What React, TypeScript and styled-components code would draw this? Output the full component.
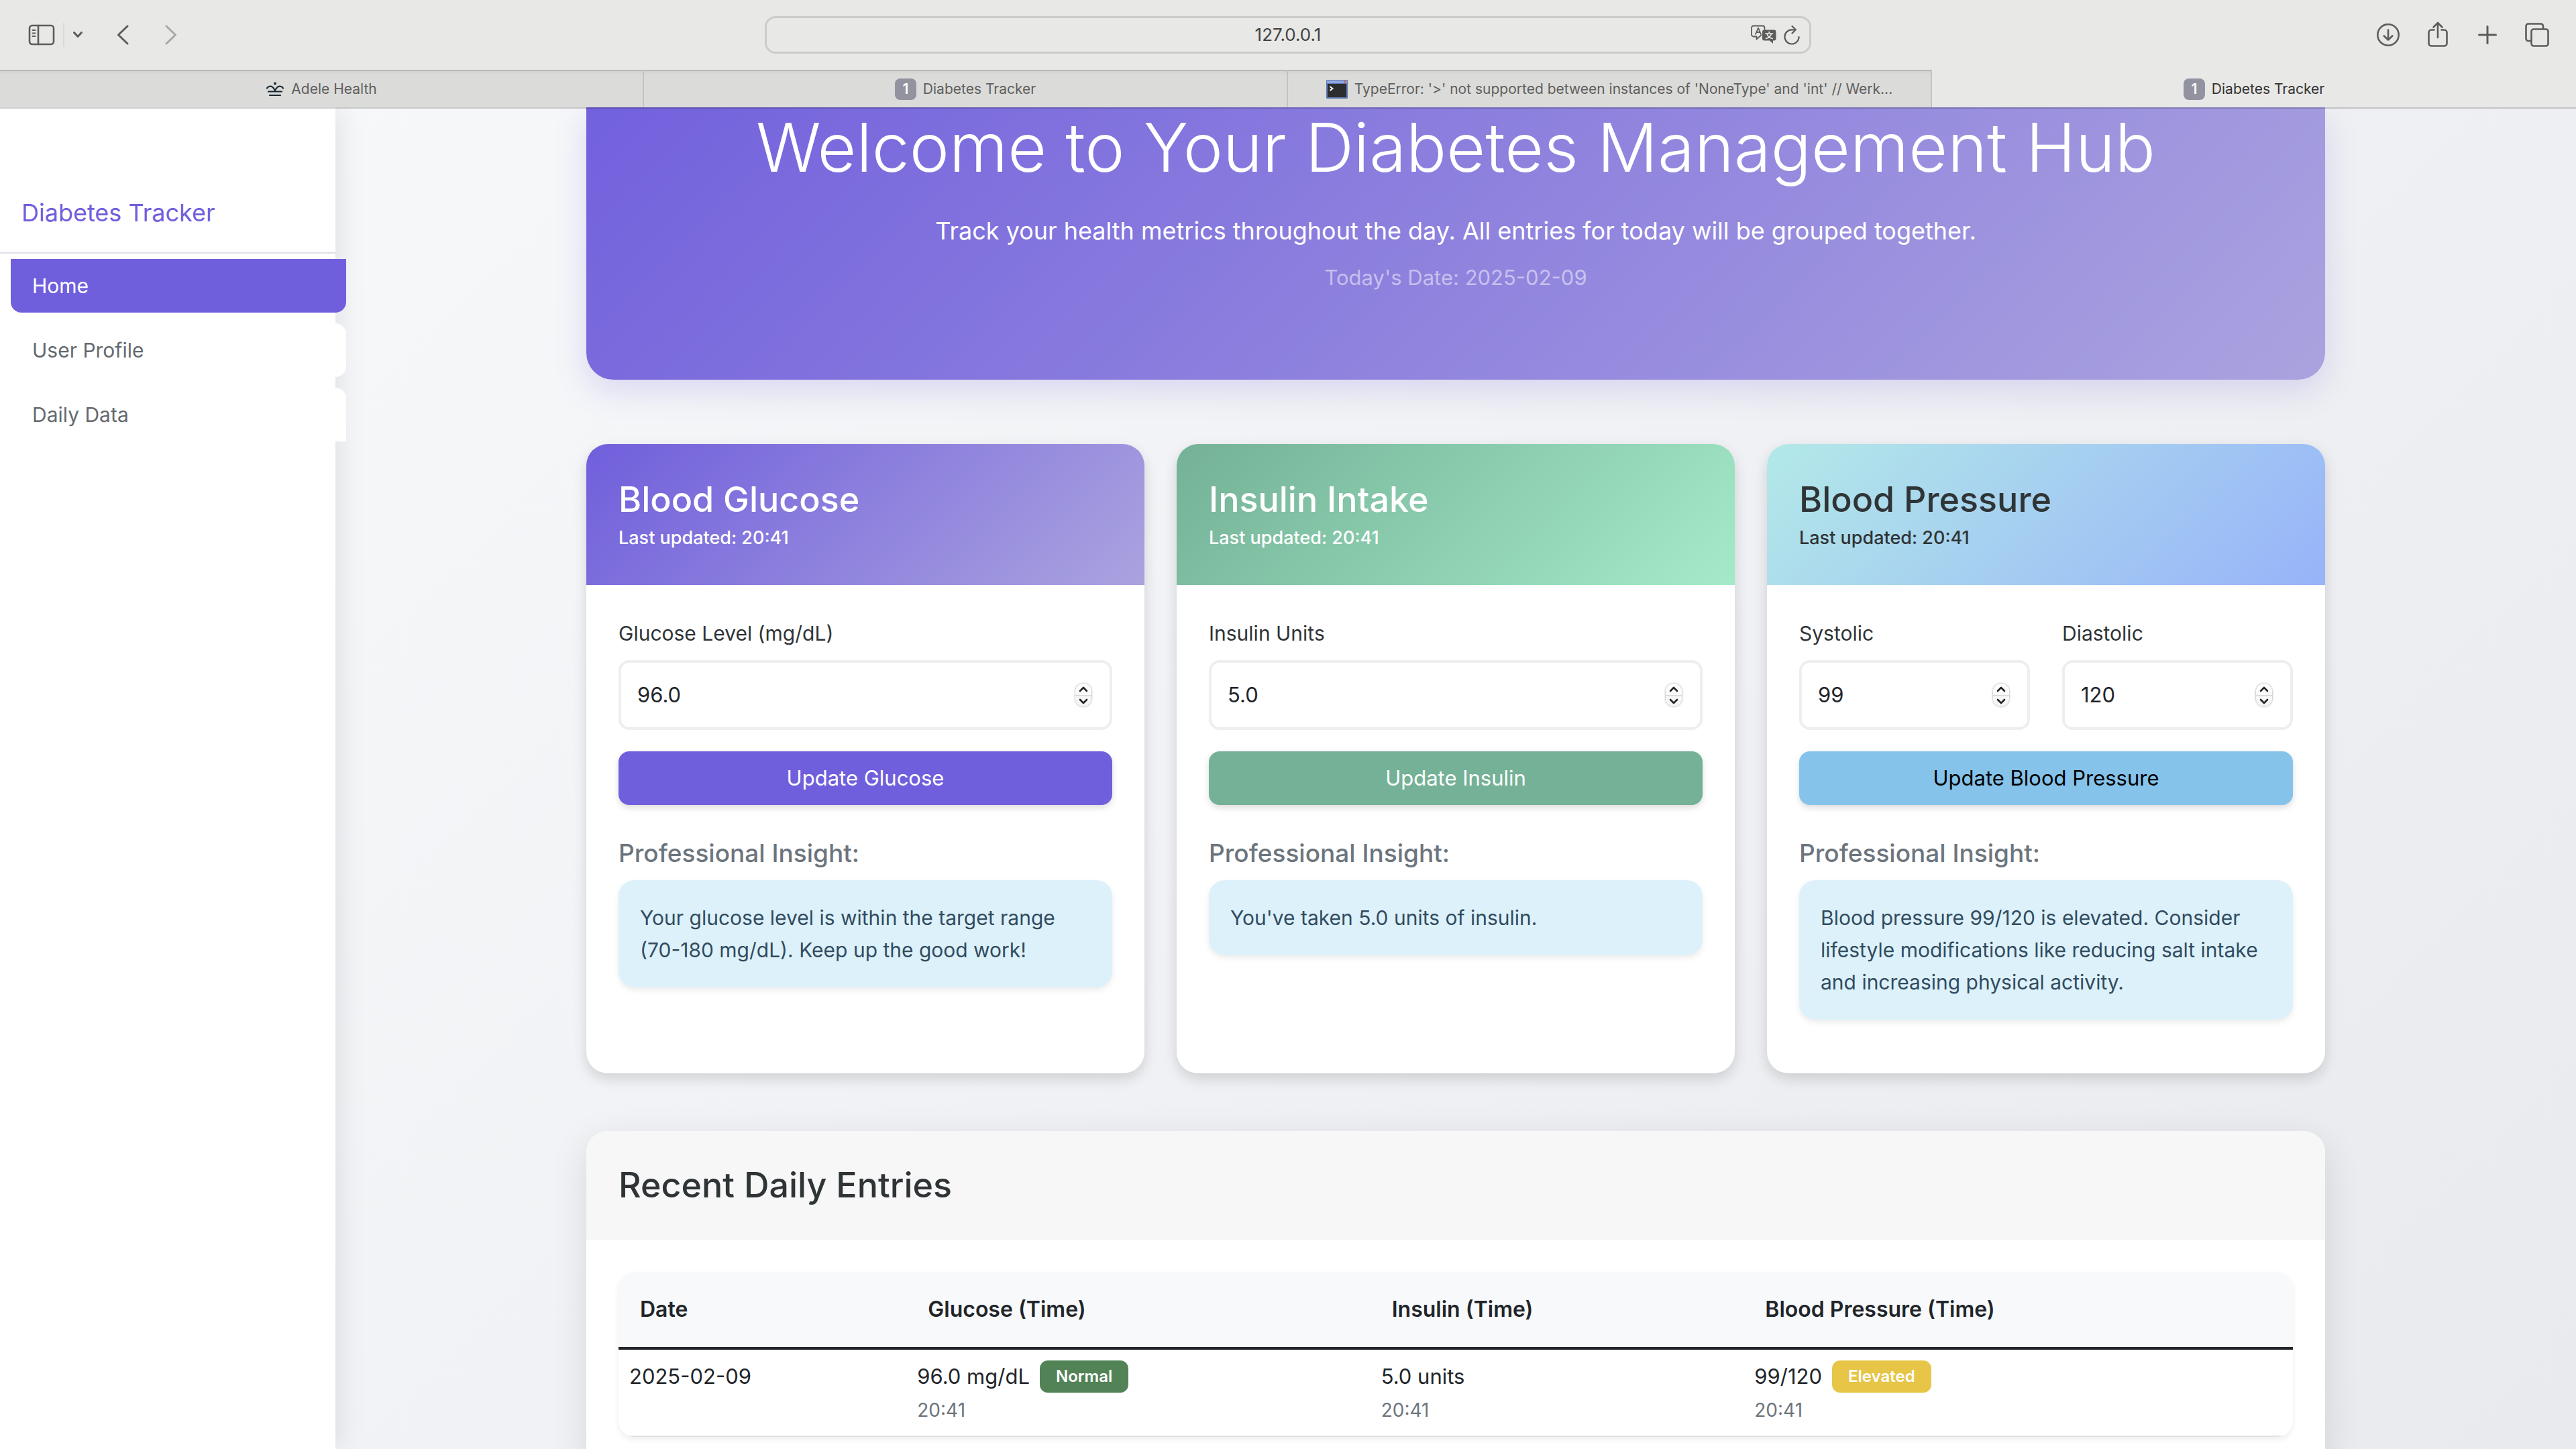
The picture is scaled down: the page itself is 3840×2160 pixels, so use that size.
import React from "react";
import styled, { createGlobalStyle } from "styled-components";

const colors = {
  chrome: "#e8e8e6",
  chromeDark: "#dbdbd9",
  primary: "#705fdc",
  ink: "#212529",
  heading: "#2f3436",
  muted: "#6c757d",
};

const Global = createGlobalStyle`
  *, *::before, *::after { box-sizing: border-box; }
  html, body, #root { height: 100%; }
  body {
    margin: 0;
    font-family: Inter, "Liberation Sans", sans-serif;
    font-size: 30px;
    line-height: 48px;
    color: ${colors.ink};
  }
  h1, h2, h3, p { margin: 0; font-weight: 500; }
  button, input { font: inherit; color: inherit; }
`;

/* ---------- browser frame ---------- */

const Window = styled.div`
  height: 100vh;
  display: flex;
  flex-direction: column;
  overflow: hidden;
`;

const Toolbar = styled.header`
  flex: none;
  display: grid;
  grid-template-columns: 1fr minmax(0, 1560px) 1fr;
  align-items: center;
  height: 104px;
  padding: 0 34px;
  background: ${colors.chrome};
  color: #5c5c5b;
`;

const ToolGroup = styled.div<{ $end?: boolean }>`
  display: flex;
  align-items: center;
  justify-content: ${(p) => (p.$end ? "flex-end" : "flex-start")};
  gap: ${(p) => (p.$end ? 26 : 0)}px;
`;

const IconButton = styled.button<{ $width?: number; $faded?: boolean; $gap?: number }>`
  display: grid;
  place-items: center;
  width: ${(p) => p.$width ?? 48}px;
  height: 48px;
  margin: 0 0 0 ${(p) => p.$gap ?? 0}px;
  padding: 0;
  border: 0;
  background: none;
  opacity: ${(p) => (p.$faded ? 0.45 : 1)};

  svg {
    display: block;
    fill: none;
    stroke: currentColor;
    stroke-linecap: round;
    stroke-linejoin: round;
  }
`;

const ToolDivider = styled.span`
  width: 2px;
  height: 36px;
  margin: 0 6px 0 8px;
  background: #d9d9d7;
`;

const AddressBar = styled.div`
  display: flex;
  align-items: center;
  height: 56px;
  padding: 0 8px;
  border: 3px solid #cbcbc9;
  border-radius: 16px;
`;

const AddressSide = styled.div`
  display: flex;
  justify-content: flex-end;
  width: 92px;
`;

const AddressInput = styled.input`
  flex: 1;
  min-width: 0;
  padding: 0;
  border: 0;
  outline: 0;
  background: none;
  text-align: center;
  font-size: 26px;
  line-height: 32px;
  color: #424242;
`;

const TabStrip = styled.div`
  flex: none;
  position: relative;
  z-index: 1;
  display: grid;
  grid-template-columns: repeat(4, 1fr);
  height: 56px;
  box-shadow: 0 2px 0 rgba(0, 0, 0, 0.18);
`;

const TabButton = styled.button<{ $active?: boolean }>`
  display: flex;
  align-items: center;
  justify-content: center;
  gap: 10px;
  min-width: 0;
  padding: 0 16px;
  border: 0 solid #c3c3c1;
  border-top: 2px solid ${(p) => (p.$active ? colors.chrome : "#b9b9b7")};
  border-right-width: ${(p) => (p.$active ? 0 : 2)}px;
  background: ${(p) =>
    p.$active ? colors.chrome : `linear-gradient(#d3d3d1, ${colors.chromeDark} 6px)`};
  color: ${(p) => (p.$active ? "#333333" : "#5f5f5d")};
  font-size: 21px;
  line-height: 28px;
  white-space: nowrap;
`;

const NumberIcon = styled.span`
  display: grid;
  place-items: center;
  width: 32px;
  height: 32px;
  border-radius: 8px;
  background: #9392a0;
  color: #ffffff;
  font-weight: 600;
`;

/* ---------- page ---------- */

const Viewport = styled.div`
  flex: 1;
  min-height: 0;
  display: flex;
  overflow: hidden;
  background: linear-gradient(135deg, #f8f9fb, #e9eaee);
`;

const Sidebar = styled.aside`
  position: relative;
  flex: none;
  width: 500px;
  background: #ffffff;
  box-shadow: 4px 0 40px rgba(0, 0, 0, 0.1);
`;

const Brand = styled.h2`
  padding: 133px 32px 35px;
  border-bottom: 2px solid #dfdee6;
  font-size: 36px;
  font-weight: 400;
  line-height: 48px;
  color: ${colors.primary};
`;

const Nav = styled.nav`
  display: flex;
  flex-direction: column;
  gap: 16px;
  width: 100%;
  margin: 8px 0 0 16px;
`;

const NavLink = styled.a<{ $active?: boolean }>`
  padding: 16px 32px;
  border-radius: 16px;
  background: ${(p) => (p.$active ? colors.primary : "#ffffff")};
  color: ${(p) => (p.$active ? "#ffffff" : "#636a6f")};
  text-decoration: none;

  &:first-child {
    border-top-left-radius: 0;
    border-top-right-radius: 0;
  }
  &:last-child {
    border-bottom-left-radius: 0;
    border-bottom-right-radius: 0;
  }
`;

const Main = styled.main`
  flex: 1;
  min-width: 0;
`;

const Container = styled.div`
  max-width: 2640px;
  margin: 0 auto;
  padding: 0 24px;
`;

const Hero = styled.section`
  margin-bottom: 96px;
  padding: 0 64px 128px;
  border-radius: 0 0 40px 40px;
  background: linear-gradient(135deg, #7261dd, #aaa3df);
  box-shadow: 0 16px 48px rgba(112, 95, 220, 0.2);
  color: #ffffff;
  text-align: center;
`;

const HeroTitle = styled.h1`
  margin-bottom: 36px;
  font-size: 100px;
  font-weight: 300;
  line-height: 120px;
`;

const HeroLead = styled.p`
  margin-bottom: 18px;
  font-size: 36px;
  font-weight: 400;
  line-height: 56px;
`;

const HeroDate = styled.p`
  font-size: 31px;
  font-weight: 400;
  color: rgba(255, 255, 255, 0.5);
`;

const CardGrid = styled.div`
  display: grid;
  grid-template-columns: repeat(3, minmax(0, 1fr));
  gap: 48px;
  margin-bottom: 86px;
`;

const Card = styled.section`
  overflow: hidden;
  border-radius: 32px;
  background: #ffffff;
  box-shadow: 0 8px 20px rgba(0, 0, 0, 0.14);
`;

const CardHead = styled.header<{ $from: string; $to: string; $ink: string }>`
  padding: 48px;
  background: linear-gradient(135deg, ${(p) => p.$from}, ${(p) => p.$to});
  color: ${(p) => p.$ink};
`;

const CardTitle = styled.h3`
  font-size: 52px;
  line-height: 70px;
`;

const CardTime = styled.p`
  font-size: 27px;
  font-weight: 500;
  line-height: 44px;
`;

const CardBody = styled.div`
  padding: 48px;
`;

const Fields = styled.div`
  display: flex;
  gap: 48px;
`;

const Field = styled.div`
  flex: 1;
  min-width: 0;
  display: flex;
  flex-direction: column;
  gap: 16px;
`;

const Label = styled.label`
  color: ${colors.heading};
`;

const InputBox = styled.div`
  display: flex;
  align-items: center;
  height: 104px;
  padding: 0 27px 0 24px;
  border: 4px solid #eeeeee;
  border-radius: 16px;
  background: #ffffff;
`;

const NumberInput = styled.input`
  flex: 1;
  min-width: 0;
  padding: 0;
  border: 0;
  outline: 0;
  background: none;
  appearance: textfield;
  font-size: 31px;
`;

const Stepper = styled.span`
  display: flex;
  flex-direction: column;
  border-radius: 12px;
  background: linear-gradient(#ffffff, #f4f4f4);
  box-shadow: 0 0 3px rgba(0, 0, 0, 0.45);
`;

const StepButton = styled.button`
  display: grid;
  place-items: center;
  width: 24px;
  height: 17px;
  padding: 0;
  border: 0;
  background: none;
  color: ${colors.ink};

  & + & {
    border-top: 2px solid #dcdcdc;
  }
`;

const SubmitButton = styled.button<{ $color: string; $ink: string }>`
  display: block;
  width: 100%;
  height: 80px;
  margin: 32px 0 48px;
  padding: 0;
  border: 0;
  border-radius: 16px;
  background: ${(p) => p.$color};
  color: ${(p) => p.$ink};
  font-size: 31px;
  box-shadow: 0 4px 10px rgba(0, 0, 0, 0.14);
`;

const InsightTitle = styled.h3`
  margin-bottom: 16px;
  font-size: 37px;
  line-height: 48px;
  color: ${colors.muted};
`;

const Insight = styled.p`
  margin-bottom: 32px;
  padding: 32px;
  border-radius: 24px;
  background: #ddf1fb;
  box-shadow: 0 4px 10px rgba(0, 0, 0, 0.08);
  font-weight: 400;
  color: #314c5e;
`;

const EntriesCard = styled(Card)`
  box-shadow: 0 16px 56px rgba(0, 0, 0, 0.11);
`;

const EntriesHead = styled.header`
  padding: 48px;
  background: #f7f7f7;
  color: ${colors.heading};
`;

const EntriesTitle = styled.h2`
  font-size: 52px;
  line-height: 66px;
`;

const TableFrame = styled.div`
  overflow: hidden;
  border-radius: 24px;
  box-shadow: 0 4px 8px rgba(0, 0, 0, 0.07);
`;

const Table = styled.table`
  width: 100%;
  table-layout: fixed;
  border-collapse: separate;
  border-spacing: 0;
`;

const Th = styled.th<{ $width: string }>`
  width: ${(p) => p.$width};
  padding: 32px;
  border-bottom: 4px solid ${colors.ink};
  background: #f8f9fa;
  font-size: 32px;
  font-weight: 600;
  text-align: left;
`;

const Td = styled.td`
  padding: 16px 16px 12px;
  border-bottom: 2px solid #dee2e6;
  font-size: 31px;
  vertical-align: top;
`;

const Reading = styled.div`
  display: flex;
  align-items: center;
  gap: 15px;
  height: 48px;
`;

const ReadingTime = styled.div`
  font-size: 28px;
  line-height: 52px;
  color: ${colors.muted};
`;

const Badge = styled.span<{ $color: string }>`
  padding: 0 24px;
  border-radius: 12px;
  background: ${(p) => p.$color};
  color: #ffffff;
  font-size: 24px;
  font-weight: 600;
`;

/* ---------- icons ---------- */

const SidebarIcon = () => (
  <svg width="40" height="32" viewBox="0 0 40 32" strokeWidth="2.6">
    <rect x="2" y="2" width="36" height="28" rx="4" />
    <path d="M15 2v28" />
    <path d="M6.5 9h4M6.5 13.5h4M6.5 18h4" strokeWidth="2" />
  </svg>
);
const MenuChevron = () => (
  <svg width="16" height="12" viewBox="0 0 16 12" strokeWidth="3">
    <path d="M2.5 2.5 8 8.5l5.5-6" />
  </svg>
);
const BackIcon = () => (
  <svg width="20" height="32" viewBox="0 0 20 32" strokeWidth="3">
    <path d="M17 3 3.5 16 17 29" />
  </svg>
);
const ForwardIcon = () => (
  <svg width="20" height="32" viewBox="0 0 20 32" strokeWidth="3">
    <path d="M3 3l13.5 13L3 29" />
  </svg>
);
const DownloadIcon = () => (
  <svg width="36" height="36" viewBox="0 0 36 36" strokeWidth="2.6">
    <circle cx="18" cy="18" r="15.7" />
    <path d="M18 10.5v15M11.8 19.5l6.2 6.2 6.2-6.2" />
  </svg>
);
const ShareIcon = () => (
  <svg width="36" height="44" viewBox="0 0 36 44" strokeWidth="2.6">
    <path d="M12.5 14.500H8.500a4 4 0 0 0-4 4v16a4 4 0 0 0 4 4h19a4 4 0 0 0 4-4v-16a4 4 0 0 0-4-4h-4" />
    <path d="M18 26V4.500M11.500 10.500 18 4l6.500 6.500" />
  </svg>
);
const PlusIcon = () => (
  <svg width="30" height="30" viewBox="0 0 30 30" strokeWidth="3">
    <path d="M15 2.5v25M2.500 15h25" />
  </svg>
);
const TabsIcon = () => (
  <svg width="38" height="38" viewBox="0 0 38 38" strokeWidth="2.6">
    <rect x="10.5" y="10.5" width="25" height="25" rx="3.5" />
    <path d="M10 28H6a3.500 3.500 0 0 1-3.500-3.500V6A3.500 3.500 0 0 1 6 2.500h18.500A3.500 3.500 0 0 1 28 6v4" />
  </svg>
);
const TranslateIcon = () => (
  <svg width="40" height="30" viewBox="0 0 40 30" strokeWidth="1.8">
    <path d="M16.5 15.5 14 17.5l-4.500 4v-4H5a3 3 0 0 1-3-3V4.500a3 3 0 0 1 3-3h13.500a3 3 0 0 1 3 3V7" />
    <path d="M8 14l4-9.500L16 14M9.300 11h5.400" />
    <path
      d="M21 7.500h14.500a3 3 0 0 1 3 3v10a3 3 0 0 1-3 3H34V28l-5-4.500h-8a3 3 0 0 1-3-3v-10a3 3 0 0 1 3-3z"
      fill="currentColor"
      stroke="none"
    />
    <path d="M23 13h10.500M28.200 10.500V13M31.500 13.500c-1 3.500-4 6-8 7M25 13.500c1 3.500 4 6 8.300 7" stroke={colors.chrome} strokeWidth="1.7" />
  </svg>
);
const ReloadIcon = () => (
  <svg width="26" height="30" viewBox="0 0 26 30" strokeWidth="2.2">
    <path d="M18.5 7.300h-5.500a10.600 10.600 0 1 0 10.600 10.700" />
    <path d="M13.500 2l5.300 5.300-5.300 5.300" />
  </svg>
);
const CrownIcon = () => (
  <svg width="28" height="22" viewBox="0 0 28 22" fill="none" stroke="#17262f" strokeWidth="2.2" strokeLinecap="round">
    <circle cx="14" cy="2.500" r="2" fill="#17262f" stroke="none" />
    <path d="M2 9.500c1.500-3 6-4 9-1 1.500 1.500 2.500 3 3 5 .5-2 1.500-3.500 3-5 3-3 7.500-2 9 1" />
    <path d="M4 14.500h20M6 20h16" />
  </svg>
);
const TerminalIcon = () => (
  <svg width="32" height="28" viewBox="0 0 32 28">
    <rect width="32" height="28" rx="1" fill="#5f78b4" />
    <rect x="1" y="1" width="30" height="4" fill="#92a9e0" />
    <rect x="26" y="1.5" width="3.5" height="3" fill="#d0664f" />
    <rect x="2" y="6" width="28" height="20" fill="#2c2d2f" />
    <path d="M5.5 10l4 3-4 3" fill="none" stroke="#ffffff" strokeWidth="2" />
  </svg>
);
const StepIcon = ({ down }: { down?: boolean }) => (
  <svg width="14" height="9" viewBox="0 0 14 9" fill="none" stroke="currentColor" strokeWidth="2.6" strokeLinecap="round" strokeLinejoin="round">
    <path d={down ? "M2 2l5 5 5-5" : "M2 7l5-5 5 5"} />
  </svg>
);

/* ---------- content ---------- */

type FieldData = { id: string; label: string; value: string; step: string };
type MetricData = {
  title: string;
  from: string;
  to: string;
  headInk: string;
  color: string;
  ink: string;
  fields: FieldData[];
  action: string;
  insight: string;
};

const metrics: MetricData[] = [
  {
    title: "Blood Glucose",
    from: "#705fdc",
    to: "#aaa3df",
    headInk: "#ffffff",
    color: colors.primary,
    ink: "#ffffff",
    fields: [{ id: "glucose", label: "Glucose Level (mg/dL)", value: "96.0", step: "0.1" }],
    action: "Update Glucose",
    insight: "Your glucose level is within the target range (70-180 mg/dL). Keep up the good work!",
  },
  {
    title: "Insulin Intake",
    from: "#74b196",
    to: "#a4eac9",
    headInk: "#ffffff",
    color: "#74b196",
    ink: "#ffffff",
    fields: [{ id: "insulin", label: "Insulin Units", value: "5.0", step: "0.1" }],
    action: "Update Insulin",
    insight: "You've taken 5.0 units of insulin.",
  },
  {
    title: "Blood Pressure",
    from: "#b3e9e8",
    to: "#97b3f9",
    headInk: colors.heading,
    color: "#85c3ea",
    ink: "#000000",
    fields: [
      { id: "systolic", label: "Systolic", value: "99", step: "1" },
      { id: "diastolic", label: "Diastolic", value: "120", step: "1" },
    ],
    action: "Update Blood Pressure",
    insight:
      "Blood pressure 99/120 is elevated. Consider lifestyle modifications like reducing salt intake and increasing physical activity.",
  },
];

const NumberField = ({ id, label, value, step }: FieldData) => {
  const ref = React.useRef<HTMLInputElement>(null);
  return (
    <Field>
      <Label htmlFor={id}>{label}</Label>
      <InputBox>
        <NumberInput ref={ref} id={id} type="number" step={step} defaultValue={value} />
        <Stepper>
          <StepButton type="button" aria-label={`Increase ${label}`} onClick={() => ref.current?.stepUp()}>
            <StepIcon />
          </StepButton>
          <StepButton type="button" aria-label={`Decrease ${label}`} onClick={() => ref.current?.stepDown()}>
            <StepIcon down />
          </StepButton>
        </Stepper>
      </InputBox>
    </Field>
  );
};

const MetricCard = ({ metric }: { metric: MetricData }) => (
  <Card>
    <CardHead $from={metric.from} $to={metric.to} $ink={metric.headInk}>
      <CardTitle>{metric.title}</CardTitle>
      <CardTime>Last updated: 20:41</CardTime>
    </CardHead>
    <CardBody>
      <form onSubmit={(e) => e.preventDefault()}>
        <Fields>
          {metric.fields.map((f) => (
            <NumberField key={f.id} {...f} />
          ))}
        </Fields>
        <SubmitButton type="submit" $color={metric.color} $ink={metric.ink}>
          {metric.action}
        </SubmitButton>
      </form>
      <InsightTitle>Professional Insight:</InsightTitle>
      <Insight>{metric.insight}</Insight>
    </CardBody>
  </Card>
);

const App = () => (
  <Window>
    <Global />
    <Toolbar>
      <ToolGroup>
        <IconButton aria-label="Sidebar" $gap={4}><SidebarIcon /></IconButton>
        <ToolDivider />
        <IconButton aria-label="Tab groups" $width={28}><MenuChevron /></IconButton>
        <IconButton aria-label="Back" $gap={29}><BackIcon /></IconButton>
        <IconButton aria-label="Forward" $gap={24} $faded><ForwardIcon /></IconButton>
      </ToolGroup>
      <AddressBar>
        <AddressSide />
        <AddressInput aria-label="Address" defaultValue="127.0.0.1" />
        <AddressSide>
          <IconButton aria-label="Translate"><TranslateIcon /></IconButton>
          <IconButton aria-label="Reload" $width={36}><ReloadIcon /></IconButton>
        </AddressSide>
      </AddressBar>
      <ToolGroup $end>
        <IconButton aria-label="Downloads"><DownloadIcon /></IconButton>
        <IconButton aria-label="Share"><ShareIcon /></IconButton>
        <IconButton aria-label="New tab"><PlusIcon /></IconButton>
        <IconButton aria-label="Tab overview"><TabsIcon /></IconButton>
      </ToolGroup>
    </Toolbar>
    <TabStrip role="tablist">
      <TabButton role="tab"><CrownIcon />Adele Health</TabButton>
      <TabButton role="tab"><NumberIcon>1</NumberIcon>Diabetes Tracker</TabButton>
      <TabButton role="tab">
        <TerminalIcon />
        {"TypeError: '>' not supported between instances of 'NoneType' and 'int' // Werk..."}
      </TabButton>
      <TabButton role="tab" aria-selected $active><NumberIcon>1</NumberIcon>Diabetes Tracker</TabButton>
    </TabStrip>
    <Viewport>
      <Sidebar>
        <Brand>Diabetes Tracker</Brand>
        <Nav>
          <NavLink href="#home" $active>Home</NavLink>
          <NavLink href="#profile">User Profile</NavLink>
          <NavLink href="#daily">Daily Data</NavLink>
        </Nav>
      </Sidebar>
      <Main>
        <Container>
          <Hero>
            <HeroTitle>Welcome to Your Diabetes Management Hub</HeroTitle>
            <HeroLead>
              Track your health metrics throughout the day. All entries for today will be grouped together.
            </HeroLead>
            <HeroDate>Today's Date: 2025-02-09</HeroDate>
          </Hero>
          <CardGrid>
            {metrics.map((m) => (
              <MetricCard key={m.title} metric={m} />
            ))}
          </CardGrid>
          <EntriesCard>
            <EntriesHead>
              <EntriesTitle>Recent Daily Entries</EntriesTitle>
            </EntriesHead>
            <CardBody>
              <TableFrame>
                <Table>
                  <thead>
                    <tr>
                      <Th $width="17.2%">Date</Th>
                      <Th $width="27.7%">Glucose (Time)</Th>
                      <Th $width="22.3%">Insulin (Time)</Th>
                      <Th $width="32.8%">Blood Pressure (Time)</Th>
                    </tr>
                  </thead>
                  <tbody>
                    <tr>
                      <Td>2025-02-09</Td>
                      <Td>
                        <Reading>96.0 mg/dL<Badge $color="#528357">Normal</Badge></Reading>
                        <ReadingTime>20:41</ReadingTime>
                      </Td>
                      <Td>
                        <Reading>5.0 units</Reading>
                        <ReadingTime>20:41</ReadingTime>
                      </Td>
                      <Td>
                        <Reading>99/120<Badge $color="#e6c547">Elevated</Badge></Reading>
                        <ReadingTime>20:41</ReadingTime>
                      </Td>
                    </tr>
                  </tbody>
                </Table>
              </TableFrame>
            </CardBody>
          </EntriesCard>
        </Container>
      </Main>
    </Viewport>
  </Window>
);

export default App;
